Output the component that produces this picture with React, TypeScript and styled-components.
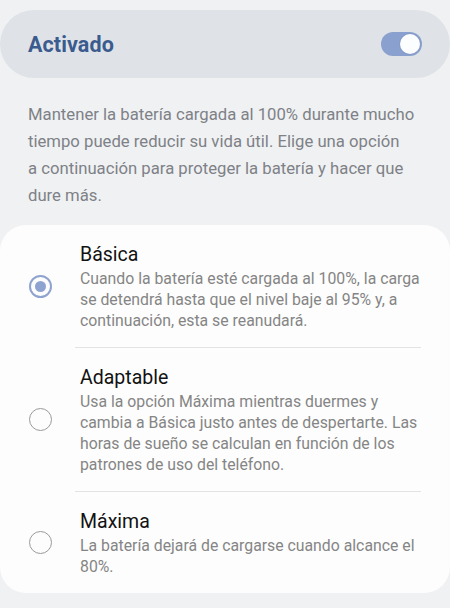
import React from 'react'
import styled, { createGlobalStyle } from 'styled-components'

const GlobalStyle = createGlobalStyle`
  html, body {
    margin: 0;
    padding: 0;
    background: #f0f1f3;
  }
  body {
    font-family: Roboto, "Noto Sans", sans-serif;
    -webkit-font-smoothing: antialiased;
  }
`

const Page = styled.div`
  width: 450px;
  height: 608px;
  overflow: hidden;
  background: #f0f1f3;
  padding-top: 10px;
  box-sizing: border-box;
`

const SwitchBar = styled.div`
  height: 68px;
  border-radius: 34px;
  background: #dfe2e7;
  display: flex;
  align-items: center;
  justify-content: space-between;
  padding: 0 28px;
`

const SwitchLabel = styled.span`
  font-size: 21.5px;
  font-weight: 700;
  color: #3a5b8e;
  letter-spacing: 0.1px;
`

const Track = styled.div<{ $on: boolean }>`
  width: 41px;
  height: 24px;
  border-radius: 12px;
  background: ${({ $on }) => ($on ? '#8aa1cf' : '#c4c7cc')};
  display: flex;
  align-items: center;
  justify-content: ${({ $on }) => ($on ? 'flex-end' : 'flex-start')};
  padding: 0 2px;
  box-sizing: border-box;
`

const Knob = styled.div`
  width: 20px;
  height: 20px;
  border-radius: 50%;
  background: #fcfdff;
  box-shadow: 0 0 0 1px rgba(120, 140, 180, 0.25);
`

const Intro = styled.p`
  margin: 23px 28px 16px;
  font-size: 16.7px;
  line-height: 27px;
  color: #7e8187;
`

const Card = styled.div`
  background: #fdfdfd;
  border-radius: 26px;
  height: 368px;
`

const Option = styled.div`
  display: flex;
  align-items: center;
  padding: 16px 28px 16px 0;
`

const RadioCol = styled.div`
  width: 80px;
  display: flex;
  justify-content: center;
  flex-shrink: 0;
`

const Radio = styled.div<{ $checked: boolean }>`
  width: 23px;
  height: 23px;
  border-radius: 50%;
  box-sizing: border-box;
  border: ${({ $checked }) => ($checked ? '2.5px solid #8ea3cf' : '1.5px solid #9a9a9a')};
  display: flex;
  align-items: center;
  justify-content: center;

  &::after {
    content: '';
    display: ${({ $checked }) => ($checked ? 'block' : 'none')};
    width: 11px;
    height: 11px;
    border-radius: 50%;
    background: #8ea3cf;
  }
`

const OptionText = styled.div`
  flex: 1;
`

const OptionTitle = styled.div`
  font-size: 19.5px;
  line-height: 27px;
  color: #121212;
`

const OptionDesc = styled.div`
  font-size: 15.8px;
  line-height: 21px;
  color: #858585;
`

const Divider = styled.div`
  height: 1px;
  background: #e3e3e3;
  margin: 0 29px 0 75px;
`

const options = [
  {
    title: 'Básica',
    desc: 'Cuando la batería esté cargada al 100%, la carga se detendrá hasta que el nivel baje al 95% y, a continuación, esta se reanudará.',
    checked: true,
  },
  {
    title: 'Adaptable',
    desc: 'Usa la opción Máxima mientras duermes y cambia a Básica justo antes de despertarte. Las horas de sueño se calculan en función de los patrones de uso del teléfono.',
    checked: false,
  },
  {
    title: 'Máxima',
    desc: 'La batería dejará de cargarse cuando alcance el 80%.',
    checked: false,
  },
]

export default function App() {
  return (
    <Page>
      <GlobalStyle />
      <SwitchBar>
        <SwitchLabel>Activado</SwitchLabel>
        <Track $on>
          <Knob />
        </Track>
      </SwitchBar>
      <Intro>
        Mantener la batería cargada al 100% durante mucho tiempo puede reducir su vida útil. Elige una opción a&nbsp;continuación para proteger la batería y hacer que dure más.
      </Intro>
      <Card>
        {options.map((o, i) => (
          <React.Fragment key={o.title}>
            {i > 0 && <Divider />}
            <Option>
              <RadioCol>
                <Radio $checked={o.checked} />
              </RadioCol>
              <OptionText>
                <OptionTitle>{o.title}</OptionTitle>
                <OptionDesc>{o.desc}</OptionDesc>
              </OptionText>
            </Option>
          </React.Fragment>
        ))}
      </Card>
    </Page>
  )
}
